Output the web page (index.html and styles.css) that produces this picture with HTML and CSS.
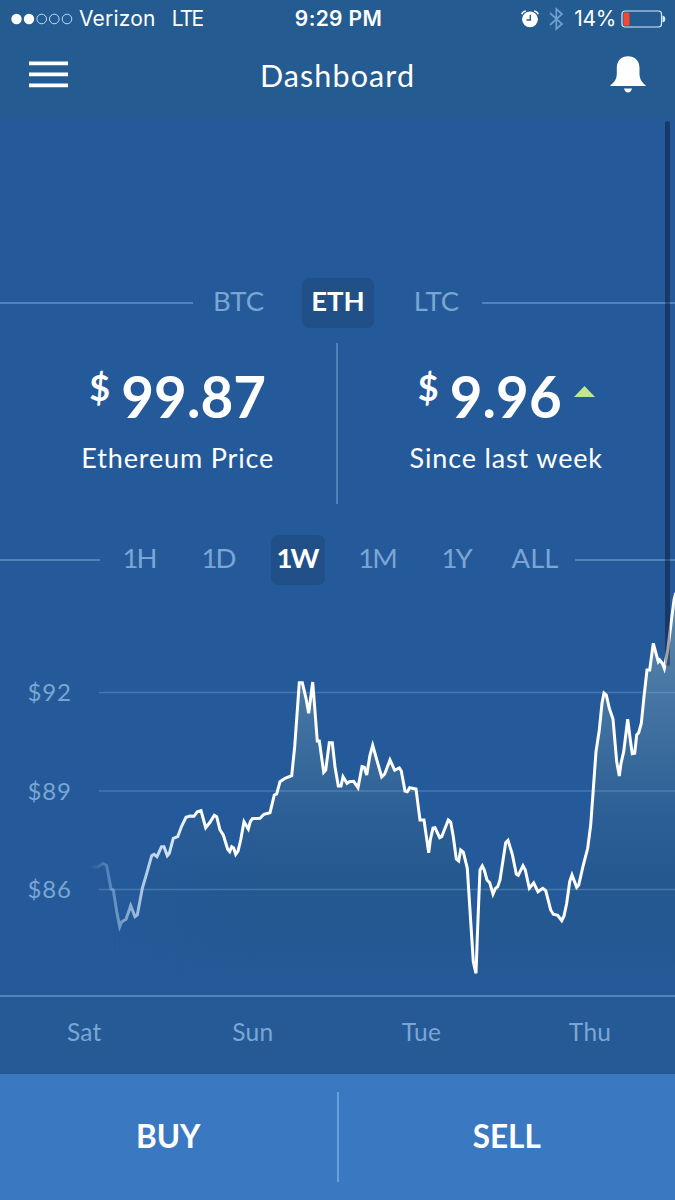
FILE: index.html
```html
<!DOCTYPE html>
<html lang="en">
<head>
<meta charset="utf-8">
<title>Dashboard</title>
<link rel="stylesheet" href="styles.css">
</head>
<body>
<div class="app">
  <header class="header">
    <div class="status">
      <div class="status-left">
        <svg class="signal" width="62" height="12" viewBox="0 0 62 12">
          <g fill="#fff"><circle cx="5.5" cy="6" r="5.2"/><circle cx="18" cy="6" r="5.2"/></g>
          <g fill="none" stroke="#b9dcfa" stroke-width="1"><circle cx="30.7" cy="6" r="4.8"/><circle cx="43.3" cy="6" r="4.8"/><circle cx="56" cy="6" r="4.8"/></g>
        </svg>
        <span class="carrier">Verizon</span>
        <span class="network">LTE</span>
      </div>
      <span class="clock">9:29 PM</span>
      <div class="status-right">
        <svg class="alarm" width="18" height="18" viewBox="0 0 18 18">
          <circle cx="9" cy="9.3" r="7.9" fill="#fff"/>
          <path d="M9.3 4.7V10H5.5" fill="none" stroke="#245b90" stroke-width="1.4"/>
          <path d="M.8 4.2Q1.8 1.4 4.8 1M17.2 4.2Q16.2 1.4 13.2 1" fill="none" stroke="#fff" stroke-width="1.5"/>
        </svg>
        <svg class="bluetooth" width="15" height="24" viewBox="0 0 15 24">
          <path d="M1 6L13 17L7.3 22V2L13 7L1 18" fill="none" stroke="#6f9fcb" stroke-width="1.7"/>
        </svg>
        <span class="percent">14%</span>
        <svg class="battery" width="45" height="18" viewBox="0 0 45 18">
          <rect x="1" y="1" width="39.5" height="16" rx="3" fill="none" stroke="#d9ecfb" stroke-width="1.2"/>
          <rect x="2.5" y="2.5" width="6" height="13" rx="1" fill="#f04a32"/>
          <path d="M41.5 5.5Q44.3 6 44.3 9T41.5 12.5Z" fill="#d9ecfb"/>
        </svg>
      </div>
    </div>
    <div class="navbar">
      <svg class="menu" width="39" height="27" viewBox="0 0 39 27"><path d="M0 2.3H39M0 13.3H39M0 24.3H39" stroke="#fff" stroke-width="3.8"/></svg>
      <h1 class="title">Dashboard</h1>
      <svg class="bell" width="36" height="37" viewBox="0 0 36 37">
        <path d="M0 30C3 27 6.8 24 6.8 18V12C6.8 4.5 11.5.3 18 .3S29.5 4.5 29.5 12V18C29.5 24 33 27 36 30Z" fill="#fff"/>
        <path d="M14 32.5H22Q21 36.5 18 36.5T14 32.5Z" fill="#fff"/>
      </svg>
    </div>
  </header>

  <main class="content">
    <nav class="tabs coins">
      <i class="rule"></i>
      <span class="tab">BTC</span><span class="tab active">ETH</span><span class="tab">LTC</span>
      <i class="rule"></i>
    </nav>

    <section class="stats">
      <div class="stat">
        <div class="amount"><span class="currency">$</span><span class="value">99.87</span></div>
        <div class="caption">Ethereum Price</div>
      </div>
      <div class="stat change">
        <div class="amount"><span class="currency">$</span><span class="value">9.96</span><svg class="up" width="21" height="11" viewBox="0 0 21 11"><path d="M0 11L10.5 0L21 11Z" fill="#c3e78c"/></svg></div>
        <div class="caption">Since last week</div>
      </div>
    </section>

    <nav class="tabs ranges">
      <i class="rule"></i>
      <span class="tab">1H</span><span class="tab">1D</span><span class="tab active">1W</span><span class="tab">1M</span><span class="tab">1Y</span><span class="tab all">ALL</span>
      <i class="rule"></i>
    </nav>

    <svg class="chart" width="675" height="411" viewBox="0 584 675 411">
      <defs>
        <linearGradient id="fill" gradientUnits="userSpaceOnUse" x1="0" y1="600" x2="0" y2="990">
          <stop offset="0" stop-color="#5d88ad"/><stop offset=".2" stop-color="#4b79a5"/>
          <stop offset=".4" stop-color="#396a9c"/><stop offset=".55" stop-color="#2c5f95"/>
          <stop offset=".72" stop-color="#24588f"/><stop offset=".87" stop-color="#245892"/>
          <stop offset="1" stop-color="#255a9a"/>
        </linearGradient>
        <linearGradient id="fade" gradientUnits="userSpaceOnUse" x1="90" y1="0" x2="200" y2="0">
          <stop offset="0" stop-color="#b5d8f5" stop-opacity="0"/><stop offset=".2" stop-color="#b5d8f5" stop-opacity=".4"/>
          <stop offset=".5" stop-color="#d5e9fa" stop-opacity=".8"/><stop offset="1" stop-color="#fff"/>
        </linearGradient>
        <linearGradient id="areafade" gradientUnits="userSpaceOnUse" x1="90" y1="0" x2="260" y2="0">
          <stop offset="0" stop-color="#fff" stop-opacity="0"/><stop offset="1" stop-color="#fff"/>
        </linearGradient>
        <mask id="areamask" maskUnits="userSpaceOnUse" x="0" y="584" width="675" height="411"><rect y="584" width="675" height="411" fill="url(#areafade)"/></mask>
        <path id="series" d="M93.3 867.3L98.3 866.7L102.7 863.5L106.5 865.5L111 889L113.3 890L116.7 911.7L119.7 926.7L121.5 922L126 919.3L130.7 905.7L135 916.7L137.3 915L142.3 888.3L146.7 873.3L151.7 855.7L154 854.3L157 856.7L161.5 846.7L164 846.7L167.3 855.7L169.3 853.3L173.3 838.3L177.7 836.7L181.7 826L186 817.3L190 816L194 816.3L197.3 811.7L201 810.7L205.7 827.7L210 822.3L214.3 815.3L216.7 816.7L220 830L223.3 835L227.7 849.3L229.7 851.7L231.7 846.7L233.7 848L235.7 854.3L238 851L240.7 840L244 821.7L248.3 829L250.3 821.7L252.3 818.7L260 818.3L264 814.3L270 812.7L274.3 795L276.7 794L280 781.7L285 778.3L291.7 775.7L294.7 746.7L299.3 682.7L302.3 682.7L306 698.3L308.7 713.3L312.7 682L317.3 741L319.3 741L323.7 772.3L325.7 770L329.3 742.7L332.3 742.7L335 766.7L338.3 786L341 786L343 776.7L347 783.3L349.3 781.7L353.7 781.3L358 787.7L362 766.7L364.3 767.3L366.7 775L370 755L372.7 745.3L377.3 761.7L381.7 777L384.7 774L390 760L394.7 770.3L399.3 768L401.3 771L405 791L407.3 791.7L409.7 787.7L416 789L420 820L424 820L428.7 852.7L430.3 840L433 828L435 827.7L439.7 837.7L441.7 836.7L448.3 820L450.7 822L453.3 836.7L456.3 859L458.7 861L460.7 850L463.3 852L467.3 868.3L473.3 961.7L476 973.3L477.7 926.7L480 870L482.3 866L484.3 870L487 880L489.7 882.7L493 894L495.3 888.7L497.7 886.7L500 880L505.7 842.7L508 840.3L512.3 854.3L516.3 874L518.3 875.3L523 865.7L525.3 870L529.3 888.3L533.7 883L538 891.7L542.7 888.3L545.7 890.7L550.7 910L553.3 914.3L557.7 915.3L561.7 920.7L564 916L566.7 903.3L569.7 881.7L572 875L576.7 887.3L578.7 885L583.3 865L587.7 848.3L590.7 825L596 751.7L599.3 730L602 703.3L604 693L606.3 695L609.3 708.3L613 719L616.7 761.7L619.3 776L621 763.3L623.7 751.7L627.7 719.3L630.3 740L632.3 753.7L634.7 753.3L636.7 735L638.7 732.7L641.3 723.3L644 696.7L647 670L649.7 670L653.3 643.3L658.3 661.7L659.7 660L662.3 663.3L664.3 668.3L667.7 650L671.7 618.3L674 600L675.5 594L690 590V1010H84V867.3Z"/>
      </defs>
      <g mask="url(#areamask)"><use href="#series" fill="url(#fill)"/></g>
      <path class="grid" d="M99 692.5H675M99 791H675M99 889.5H675"/>
      <use href="#series" class="line" stroke="url(#fade)"/>
      <g class="ylabel">
        <text x="27.5" y="701" textLength="43.5">$92</text>
        <text x="27.5" y="799.5" textLength="43.5">$89</text>
        <text x="27.5" y="898" textLength="43.5">$86</text>
      </g>
    </svg>

    <div class="days"><span>Sat</span><span>Sun</span><span>Tue</span><span>Thu</span></div>
  </main>

  <footer class="actions">
    <div class="action">BUY</div>
    <i class="divider"></i>
    <div class="action">SELL</div>
  </footer>
  <div class="scrollbar"></div>
</div>
</body>
</html>
```

FILE: styles.css
```css
* { box-sizing: border-box; }
body { margin: 0; background: #255a9a; }
.app {
  position: relative;
  display: flex;
  flex-direction: column;
  width: 675px;
  height: 1200px;
  overflow: hidden;
  color: #fff;
  background: #255a9a;
  font-family: Lato, "Open Sans", sans-serif;
}
svg { display: block; flex: none; }

.header { height: 117px; background: #245b90; }
.status {
  display: grid;
  grid-template-columns: 1fr auto 1fr;
  align-items: center;
  height: 38px;
  padding: 0 9px 0 11px;
  font-family: Inter, Roboto, sans-serif;
  font-size: 21px;
  line-height: 38px;
  white-space: nowrap;
}
.status-left, .status-right { display: flex; align-items: center; }
.status-right { justify-content: flex-end; }
.carrier { margin-left: 6px; letter-spacing: .2px; }
.network { margin-left: 16px; letter-spacing: -1.8px; }
.clock { font-weight: 600; letter-spacing: .35px; }
.bluetooth { margin-left: 10px; }
.percent { margin: 0 5px 0 10px; letter-spacing: -.3px; }

.navbar {
  display: grid;
  grid-template-columns: 1fr auto 1fr;
  align-items: center;
  height: 76px;
  padding: 0 29px;
}
.menu { margin-bottom: 3px; }
.title { margin: -2px 0 0; font-size: 30.5px; font-weight: 400; letter-spacing: 1.1px; }
.bell { justify-self: end; margin-bottom: 4px; }

.content { display: flex; flex-direction: column; height: 957px; padding-top: 161px; }
.tabs { display: flex; align-items: center; height: 50px; font-size: 27.5px; line-height: 46px; color: #7ba6d3; }
.rule { flex: none; height: 2px; background: #4e83bb; }
.tab { flex: none; height: 50px; text-align: center; }
.active { border-radius: 7px; color: #fff; background: #205087; font-weight: 700; }
.coins .tab:nth-of-type(1) { width: 91px; margin-right: 18px; }
.coins .active { width: 72px; }
.coins .tab:nth-of-type(3) { width: 91px; margin-left: 17px; }
.coins .rule { width: 193px; }

.stats {
  display: grid;
  grid-template-columns: 1fr 1fr;
  height: 162px;
  margin-top: 15px;
  background: linear-gradient(#4e83bb, #4e83bb) 336px 0 / 2px 100% no-repeat;
}
.stat { display: flex; flex-direction: column; align-items: center; padding: 20px 0 0 18px; }
.change { padding-left: 0; }
.amount { display: flex; height: 68px; line-height: 67px; }
.currency { margin-right: 11px; font-size: 36px; font-weight: 700; line-height: 48px; }
.value { font-size: 56.5px; font-weight: 700; letter-spacing: .1px; }
.up { margin: 23px 0 0 12px; }
.caption { font-size: 27px; line-height: 54px; letter-spacing: .85px; }

.ranges { margin-top: 31px; }
.ranges .rule { width: 100px; }
.ranges .tab { width: 79px; padding-right: 1px; letter-spacing: -2px; }
.ranges .active { width: 54px; margin: 0 13px; padding-right: 2px; }
.ranges .all { width: 79px; letter-spacing: 0; }

.chart { margin-top: -1px; }
.chart .grid { stroke: #8fc0ec; stroke-opacity: .3; stroke-width: 1.5; }
.chart .line { fill: none; stroke-width: 3; stroke-linejoin: miter; }
.ylabel { fill: #7ba6d3; font-size: 24px; }

.days {
  display: grid;
  grid-template-columns: repeat(4, 168.6px);
  height: 79px;
  border-top: 2px solid #4e83bb;
  color: #7ba6d3;
  background: #255a97;
  font-size: 24.5px;
  line-height: 69px;
  text-align: center;
  letter-spacing: .3px;
}

.actions { display: flex; align-items: center; height: 126px; background: #3b78c2; }
.action { flex: 1; padding-bottom: 3px; text-align: center; font-size: 31.5px; font-weight: 700; }
.divider { width: 2px; height: 90px; background: #679fdb; }
.scrollbar { position: absolute; left: 665px; top: 121px; width: 5px; height: 545px; border-radius: 3px; background: rgba(5, 0, 20, .37); }
```
